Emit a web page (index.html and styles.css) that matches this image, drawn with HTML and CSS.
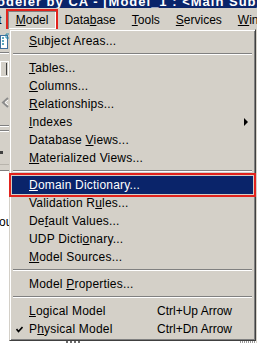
FILE: index.html
```html
<!DOCTYPE html>
<html lang="en">
<head>
    <meta charset="UTF-8">
    <meta name="viewport" content="width=device-width, initial-scale=1.0">
    <link rel="stylesheet" href="styles.css">
</head>
<body>
<div class="window">
    <div class="titlebar">
        <span class="title">odeler by CA - [Model_1 : &lt;Main Subject Area&gt;]</span>
    </div>
    <div class="menubar">
        <span class="mb-item mb-edit"><u>E</u>dit</span>
        <span class="mb-item open"><u>M</u>odel</span>
        <span class="mb-item">Data<u>b</u>ase</span>
        <span class="mb-item"><u>T</u>ools</span>
        <span class="mb-item"><u>S</u>ervices</span>
        <span class="mb-item"><u>W</u>indow</span>
    </div>
    <div class="workspace">
        <div class="toolstrip">
            <svg width="10" height="142" viewBox="0 0 10 142">
                <rect x="0.5" y="6.5" width="7" height="13" fill="#fff" stroke="#3d6f9e"/>
                <path d="M2 9h2M2 12h2M2 15h2" stroke="#2a8aa8" stroke-width="1.5"/>
                <path d="M9 5h-3v4h3" stroke="#2a8aa8" fill="none"/>
                <path d="M0 23.5h10" stroke="#808080"/>
                <path d="M0 24.5h10" stroke="#fff"/>
                <rect x="0.5" y="32.5" width="8" height="15" fill="none" stroke="#fff"/>
                <path d="M6.5 34v12" stroke="#404040"/>
                <polyline points="8,69 3,73.5 8,78" fill="none" stroke="#8c8c8c" stroke-width="2"/>
                <polyline points="8,71 5,73.5 8,76" fill="none" stroke="#fff" stroke-width="1"/>
                <path d="M0 96.5h10M0 101.5h10" stroke="#808080"/>
                <path d="M0 97.5h10M0 102.5h10" stroke="#fff"/>
                <rect x="0" y="122" width="3" height="3" fill="#404040"/>
                <path d="M0 135.5h10" stroke="#b8b4ac"/>
                <path d="M0 141.5h10" stroke="#808080"/>
            </svg>
        </div>
        <div class="canvas">
            <span class="canvas-text">ou</span>
            <div class="canvas-bottom">
                <span class="grip"></span>
                <span class="dots"></span>
            </div>
        </div>
    </div>

    <div class="dropdown">
        <div class="item"><span class="label"><u>S</u>ubject Areas...</span></div>
        <div class="sep"></div>
        <div class="item"><span class="label"><u>T</u>ables...</span></div>
        <div class="item"><span class="label"><u>C</u>olumns...</span></div>
        <div class="item"><span class="label"><u>R</u>elationships...</span></div>
        <div class="item"><span class="label"><u>I</u>ndexes</span><span class="sub-arrow"></span></div>
        <div class="item"><span class="label">Database <u>V</u>iews...</span></div>
        <div class="item"><span class="label"><u>M</u>aterialized Views...</span></div>
        <div class="sep"></div>
        <div class="item active"><span class="label"><u>D</u>omain Dictionary...</span></div>
        <div class="item"><span class="label">Validation R<u>u</u>les...</span></div>
        <div class="item"><span class="label">De<u>f</u>ault Values...</span></div>
        <div class="item"><span class="label">UDP Dicti<u>o</u>nary...</span></div>
        <div class="item"><span class="label"><u>M</u>odel Sources...</span></div>
        <div class="sep"></div>
        <div class="item"><span class="label">Model <u>P</u>roperties...</span></div>
        <div class="sep"></div>
        <div class="item"><span class="label"><u>L</u>ogical Model</span><span class="key">Ctrl+Up Arrow</span></div>
        <div class="item">
            <span class="check">
                <svg width="7" height="7" viewBox="0 0 7 7"><polyline points="0.5,3 2.5,5.5 6.5,1" fill="none" stroke="#000" stroke-width="1.6"/></svg>
            </span>
            <span class="label">P<u>h</u>ysical Model</span><span class="key">Ctrl+Dn Arrow</span>
        </div>
    </div>
</div>
</body>
</html>
```

FILE: styles.css
```css
body {
    margin: 0;
    width: 257px;
    height: 343px;
    overflow: hidden;
    background-color: #d4d0c8;
    font-family: 'Liberation Sans', Arial, sans-serif;
    font-size: 12px;
    color: #000;
}
.window {
    position: relative;
    height: 343px;
    display: flex;
    flex-direction: column;
}

/* title bar, only the bottom of the text shows */
.titlebar {
    height: 8px;
    overflow: hidden;
    background-color: #0a246a;
    white-space: nowrap;
}
.title {
    display: block;
    margin-top: -5px;
    margin-left: -3px;
    line-height: 14px;
    font-size: 13px;
    font-weight: bold;
    letter-spacing: 1px;
    color: #fff;
}

.menubar {
    height: 21px;
    box-sizing: border-box;
    padding-top: 3px;
    display: flex;
    white-space: nowrap;
    overflow: hidden;
    background-color: #d4d0c8;
}
.mb-item {
    height: 18px;
    line-height: 18px;
    padding: 0 8px;
}
.mb-edit {
    margin-left: -27px;
    padding-right: 6px;
}
.mb-item.open {
    box-shadow: inset 1px 1px #808080, inset -1px -1px #fff;
    outline: 2px solid #e2231d;
}
u {
    text-decoration: underline;
    text-underline-offset: 1px;
}

.workspace {
    flex: 1;
    display: flex;
    flex-direction: column;
}
.toolstrip {
    height: 142px;
    flex: none;
}
.toolstrip svg {
    display: block;
}
.canvas {
    flex: 1;
    display: flex;
    flex-direction: column;
    background-color: #fff;
    margin-right: 1px;
}
.canvas-text {
    margin-top: 44px;
    margin-left: -1px;
    line-height: 14px;
}
.canvas-bottom {
    margin-top: auto;
    height: 3px;
    display: flex;
}
.grip {
    margin-left: 66px;
    width: 16px;
    background: repeating-linear-gradient(90deg, #6b6b6b 0 2px, #fff 2px 4px);
}
.dots {
    margin-left: auto;
    width: 16px;
    background: repeating-linear-gradient(90deg, #9a9a9a 0 1px, #fff 1px 2px);
}

/* the open Model menu */
.dropdown {
    position: absolute;
    left: 9px;
    top: 29px;
    width: 247px;
    box-sizing: border-box;
    padding: 2px;
    background-color: #d4d0c8;
    border: 1px solid;
    border-color: #d4d0c8 #404040 #404040 #d4d0c8;
    box-shadow: inset 1px 1px #fff, inset -1px -1px #808080;
}
.item {
    display: flex;
    align-items: center;
    height: 18px;
    line-height: 18px;
    padding-left: 17px;
    white-space: nowrap;
}
.item .label {
    width: 128px;
    flex: none;
    letter-spacing: 0.2px;
}
.item.active {
    background-color: #0a246a;
    color: #fff;
    outline: 2px solid #e2231d;
    outline-offset: 1px;
}
.sub-arrow {
    margin-left: auto;
    margin-right: 5px;
    width: 0;
    height: 0;
    border-top: 4px solid transparent;
    border-bottom: 4px solid transparent;
    border-left: 4px solid #000;
}
.check {
    display: flex;
    width: 13px;
    margin-left: -13px;
}
.sep {
    height: 0;
    margin: 3px 1px 4px;
    border-top: 1px solid #808080;
    border-bottom: 1px solid #fff;
}
```
